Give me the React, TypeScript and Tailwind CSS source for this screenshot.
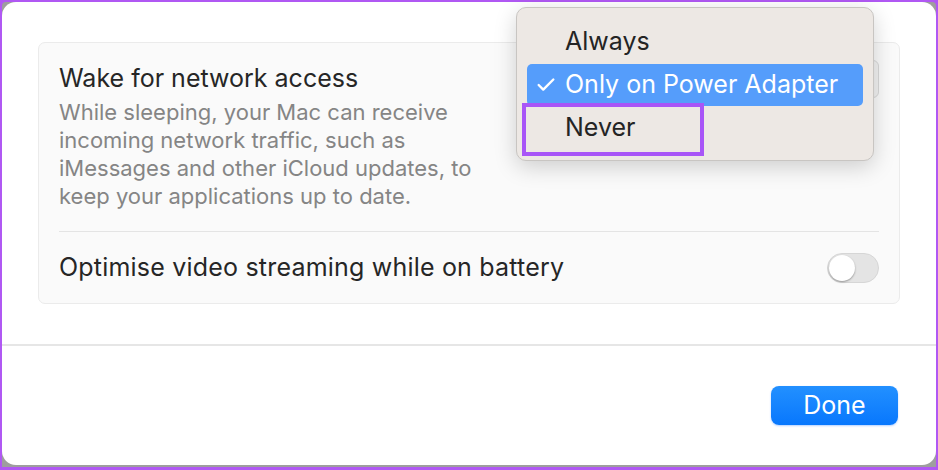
import { Check } from "lucide-react";

const font = { fontFamily: "Inter, 'Noto Sans', sans-serif" };

function Toggle() {
  return (
    <div className="relative w-[52px] h-[30px] rounded-full bg-[#e4e4e4] border border-[#d6d6d6]">
      <div className="absolute left-[1px] top-[1px] w-[26px] h-[26px] rounded-full bg-white shadow-[0_1px_2px_rgba(0,0,0,0.35)]" />
    </div>
  );
}

function PopupMenu() {
  return (
    <div className="absolute left-[514px] top-[5px] w-[358px] h-[154px] rounded-[10px] bg-[#ede8e4] border border-[#c8c5c2] shadow-[0_6px_22px_rgba(0,0,0,0.18)] px-[10px] pt-[12px]">
      <div className="h-[44px] flex items-center pl-[38px] text-[25px] text-[#242424]">Always</div>
      <div className="h-[42px] flex items-center rounded-[5px] bg-[#559dfb] text-white text-[25px]">
        <Check size={22} strokeWidth={2.6} className="ml-[8px] mr-[8px]" />
        <span>Only on Power Adapter</span>
      </div>
      <div className="absolute left-[5px] top-[95px] w-[182px] h-[53px] border-[4px] border-[#a855f7]" />
      <div className="h-[44px] flex items-center pl-[38px] text-[25px] text-[#242424]">Never</div>
    </div>
  );
}

export default function App() {
  return (
    <div className="w-[938px] h-[470px] bg-[#b058f3] pt-[2px] px-[2px] pb-[3px]" style={font}>
      <div className="h-full bg-[#9e9e9e] pb-[2px] rounded-t-[4px]">
        <div className="relative h-full bg-white rounded-[14px] flex flex-col">
          <div className="flex-1 px-[36px] pt-[40px]">
            <div className="rounded-[7px] bg-[#fafafa] border border-[#ebebeb] px-[20px]">
              <div className="flex items-start justify-between pt-[21px] pb-[21px] border-b border-[#e4e4e4]">
                <div>
                  <div className="text-[25px] leading-[28px] text-[#262626]">Wake for network access</div>
                  <div className="mt-[6px] text-[22px] leading-[28px] text-[#858585] w-[440px]">
                    While sleeping, your Mac can receive incoming network traffic, such as iMessages and other iCloud updates, to keep your applications up to date.
                  </div>
                </div>
                <div className="mt-[-4px] w-[60px] h-[38px] rounded-[6px] bg-[#f2f2f2] border border-[#d8d8d8]" />
              </div>
              <div className="h-[71px] flex items-center justify-between">
                <div className="text-[25px] tracking-[0.2px] text-[#262626]">Optimise video streaming while on battery</div>
                <Toggle />
              </div>
            </div>
          </div>
          <div className="h-[2px] bg-[#e6e6e6]" />
          <div className="h-[119px] flex items-center justify-end pr-[38px]">
            <button className="w-[127px] h-[39px] rounded-[8px] bg-gradient-to-b from-[#2290ff] to-[#0777fd] text-white text-[25px] shadow-[0_1px_2px_rgba(0,100,255,0.3)]">
              Done
            </button>
          </div>
          <PopupMenu />
        </div>
      </div>
    </div>
  );
}
